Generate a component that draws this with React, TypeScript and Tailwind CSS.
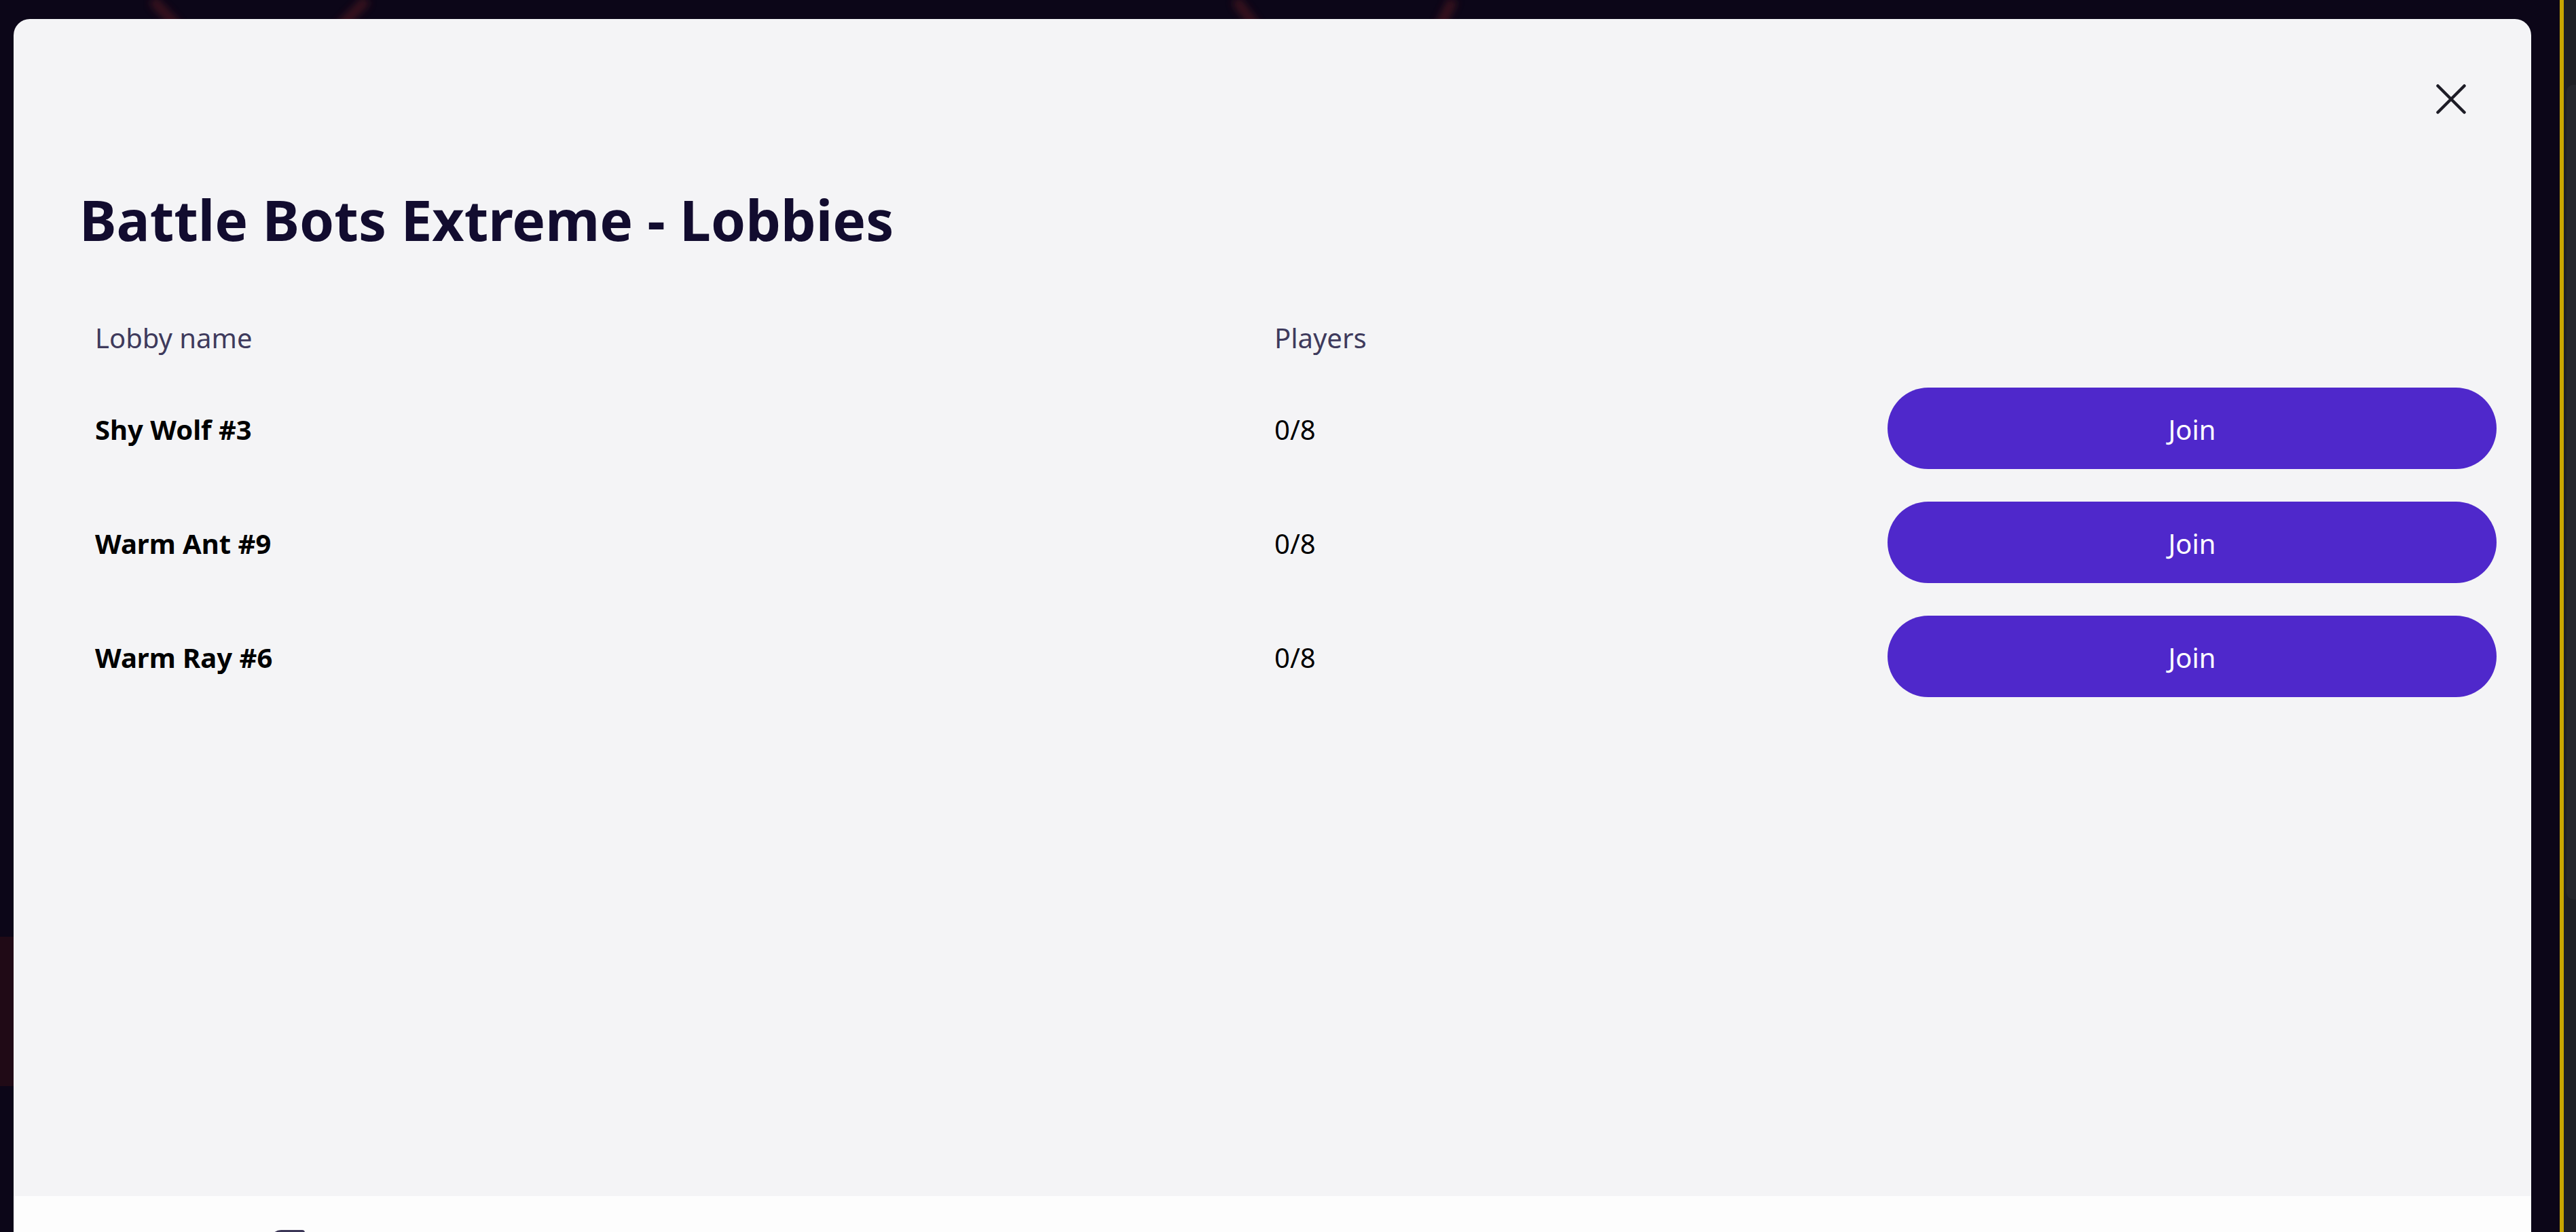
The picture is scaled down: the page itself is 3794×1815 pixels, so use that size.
const lobbies = [
  { name: "Shy Wolf #3", players: "0/8" },
  { name: "Warm Ant #9", players: "0/8" },
  { name: "Warm Ray #6", players: "0/8" },
];

function CloseIcon() {
  return (
    <svg width="44" height="44" viewBox="0 0 44 44" fill="none">
      <path
        d="M2.5 2.5 L41.5 41.5 M41.5 2.5 L2.5 41.5"
        stroke="#1d1c26"
        strokeWidth="4.5"
        strokeLinecap="round"
      />
    </svg>
  );
}

function Backdrop() {
  return (
    <svg
      className="absolute inset-0 h-full w-full"
      viewBox="0 0 3770 1815"
      preserveAspectRatio="none"
    >
      <defs>
        <filter id="blur" x="-50%" y="-50%" width="200%" height="200%">
          <feGaussianBlur stdDeviation="6" />
        </filter>
      </defs>
      <g filter="url(#blur)" stroke="#5a1a24" strokeWidth="14" opacity="0.6">
        <path d="M225 0 L262 40" />
        <path d="M540 0 L500 40" />
        <path d="M1820 0 L1850 40" />
        <path d="M2140 0 L2120 40" />
      </g>
      <rect x="0" y="1380" width="20" height="220" fill="#2a0d16" opacity="0.7" />
    </svg>
  );
}

export default function App() {
  return (
    <div className="flex h-screen w-full overflow-hidden bg-[#0c0618] font-['Noto_Sans',sans-serif]">
      <div className="relative w-[3770px] shrink-0 pl-[20px] pt-[28px]">
        <Backdrop />

        <div className="relative flex w-[3708px] flex-col overflow-hidden rounded-t-[24px]">
          <div className="flex h-[1734px] flex-col bg-[#f4f4f6] pt-[96px]">
            <div className="flex justify-end pr-[96px]">
              <button className="h-[44px] w-[44px]">
                <CloseIcon />
              </button>
            </div>

            <h1 className="mt-[114px] pl-[97px] text-[82px] font-bold leading-[83px] text-[#120c2f]">
              Battle Bots Extreme - Lobbies
            </h1>

            <div className="ml-[96px] mr-[51px] mt-[84px] grid grid-cols-[1737px_927px_897px]">
              <div className="flex h-[98px] items-center pl-[24px] text-[40px] leading-[40px] text-[#3e3a5c]">
                Lobby name
              </div>
              <div className="flex h-[98px] items-center pl-[24px] text-[40px] leading-[40px] text-[#3e3a5c]">
                Players
              </div>
              <div className="h-[98px]" />

              {lobbies.map((lobby) => (
                <div key={lobby.name} className="contents">
                  <div className="flex h-[168px] items-center pl-[24px] pt-[4px] text-[40px] font-bold leading-[40px] text-black">
                    {lobby.name}
                  </div>
                  <div className="flex h-[168px] items-center pl-[24px] pt-[4px] text-[40px] leading-[40px] text-black">
                    {lobby.players}
                  </div>
                  <div className="flex h-[168px] items-center">
                    <button className="h-[120px] w-full rounded-full bg-[#4f28cb] pt-[4px] text-[40px] leading-[40px] text-white">
                      Join
                    </button>
                  </div>
                </div>
              ))}
            </div>
          </div>

          <div className="h-[200px] bg-[#fdfdfd] pl-[378px] pt-[50px]">
            <div className="h-[40px] w-[51px] rounded-tl-[16px] rounded-tr-[4px] bg-[#3a3556]" />
          </div>
        </div>
      </div>

      <div className="w-[6px] shrink-0 bg-[#c9a700]" />
      <div className="flex-1 bg-[#1f2024] pt-[125px]">
        <div className="ml-[4px] h-[1200px] rounded-l-[10px] bg-[#26272c]" />
      </div>
    </div>
  );
}
